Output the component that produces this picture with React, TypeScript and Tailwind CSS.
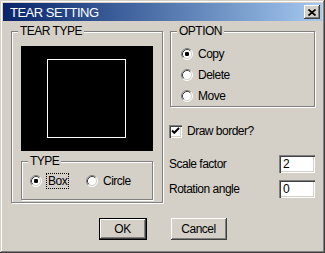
import type { ReactNode } from 'react'

const FONT = { fontFamily: '"Liberation Sans", Arial, sans-serif' }

const RAISED =
  'shadow-[inset_-1px_-1px_0_#404040,inset_1px_1px_0_#ffffff,inset_-2px_-2px_0_#808080,inset_2px_2px_0_#d4d0c8]'
const SUNKEN =
  'shadow-[inset_1px_1px_0_#808080,inset_2px_2px_0_#404040,inset_-1px_-1px_0_#ffffff,inset_-2px_-2px_0_#d4d0c8]'

function Radio({ checked }: { checked?: boolean }) {
  return (
    <svg width="12" height="12" viewBox="0 0 12 12" className="shrink-0">
      <circle cx="6" cy="6" r="5" fill="#ffffff" />
      <path d="M2.11 9.89 A5.5 5.5 0 0 1 9.89 2.11" fill="none" stroke="#808080" strokeWidth="1" />
      <path d="M9.89 2.11 A5.5 5.5 0 0 1 2.11 9.89" fill="none" stroke="#ffffff" strokeWidth="1" />
      <path d="M2.82 9.18 A4.5 4.5 0 0 1 9.18 2.82" fill="none" stroke="#404040" strokeWidth="1" />
      <path d="M9.18 2.82 A4.5 4.5 0 0 1 2.82 9.18" fill="none" stroke="#d4d0c8" strokeWidth="1" />
      {checked && <rect x="4" y="4" width="4" height="4" rx="1.2" fill="#000000" />}
    </svg>
  )
}

function Check() {
  return (
    <div className={`w-[13px] h-[13px] bg-white shrink-0 ${SUNKEN}`}>
      <svg width="13" height="13" viewBox="0 0 13 13">
        <path d="M3 5.5 L5.3 7.8 L10 3" fill="none" stroke="#000000" strokeWidth="2" />
      </svg>
    </div>
  )
}

function Group({ label, className, children }: { label: string; className: string; children: ReactNode }) {
  return (
    <div
      className={`relative border border-[#808080] shadow-[1px_1px_0_#ffffff,inset_1px_1px_0_#ffffff] ${className}`}
    >
      <span className="absolute -top-[8px] left-[6px] px-[2px] bg-[#d4d0c8] text-[12px] tracking-[-0.5px] leading-[14px] text-black">
        {label}
      </span>
      {children}
    </div>
  )
}

function RadioRow({ label, checked }: { label: string; checked?: boolean }) {
  return (
    <div className="flex items-center h-[12px] gap-[5px] leading-none text-black">
      <Radio checked={checked} />
      <span>{label}</span>
    </div>
  )
}

export default function App() {
  return (
    <div
      style={FONT}
      className="w-[325px] h-[253px] bg-[#d4d0c8] flex flex-col text-[12px] tracking-[-0.5px] shadow-[inset_-1px_-1px_0_#404040,inset_1px_1px_0_#d4d0c8,inset_-2px_-2px_0_#808080,inset_2px_2px_0_#ffffff]"
    >
      {/* title bar */}
      <div className="mx-[3px] mt-[3px] h-[18px] flex items-center justify-between bg-gradient-to-r from-[#0a246a] to-[#a6caf0] pl-[7px] pr-[2px]">
        <span className="text-white text-[13px] leading-none tracking-[-0.5px]">TEAR SETTING</span>
        <div className={`w-[16px] h-[14px] bg-[#d4d0c8] flex items-center justify-center ${RAISED}`}>
          <svg width="8" height="7" viewBox="0 0 8 7">
            <path d="M0.5 0.5 L7.5 6.5 M7.5 0.5 L0.5 6.5" stroke="#000000" strokeWidth="1.7" />
          </svg>
        </div>
      </div>

      <div className="flex mt-[10px] pl-[11px]">
        <Group label="TEAR TYPE" className="w-[152px] h-[172px] pl-[9px] pt-[14px]">
          <div className="w-[132px] h-[105px] bg-black pl-[26px] pt-[13px]">
            <div className="w-[79px] h-[79px] border border-white" />
          </div>
          <Group label="TYPE" className="mt-[10px] w-[132px] h-[39px] pl-[8px] pt-[11px]">
            <div className="flex items-center text-black">
              <div className="flex items-center w-[56px]">
                <Radio checked />
                <span className="ml-[4px] border border-dotted border-black px-[1px] leading-[14px]">Box</span>
              </div>
              <RadioRow label="Circle" />
            </div>
          </Group>
        </Group>

        <div className="ml-[6px] w-[146px] flex flex-col">
          <Group label="OPTION" className="ml-[1px] w-[145px] h-[76px] pl-[10px] pt-[16px]">
            <div className="flex flex-col gap-[9px]">
              <RadioRow label="Copy" checked />
              <RadioRow label="Delete" />
              <RadioRow label="Move" />
            </div>
          </Group>

          <div className="mt-[15px] flex items-center gap-[5px] text-black">
            <Check />
            <span>Draw border?</span>
          </div>

          <div className="mt-[15px] flex flex-col gap-[7px] text-black">
            <div className="flex items-center h-[18px]">
              <span>Scale factor</span>
              <div className={`ml-auto w-[36px] h-[18px] bg-white pl-[4px] leading-[18px] ${SUNKEN}`}>2</div>
            </div>
            <div className="flex items-center h-[18px]">
              <span>Rotation angle</span>
              <div className={`ml-auto w-[36px] h-[18px] bg-white pl-[4px] leading-[18px] ${SUNKEN}`}>0</div>
            </div>
          </div>
        </div>
      </div>

      <div className="mt-[15px] flex justify-center gap-[24px] text-black">
        <div className="w-[48px] h-[22px] border border-black">
          <div className={`w-full h-full flex items-center justify-center ${RAISED}`}>OK</div>
        </div>
        <div className={`w-[56px] h-[22px] flex items-center justify-center ${RAISED}`}>Cancel</div>
      </div>
    </div>
  )
}
